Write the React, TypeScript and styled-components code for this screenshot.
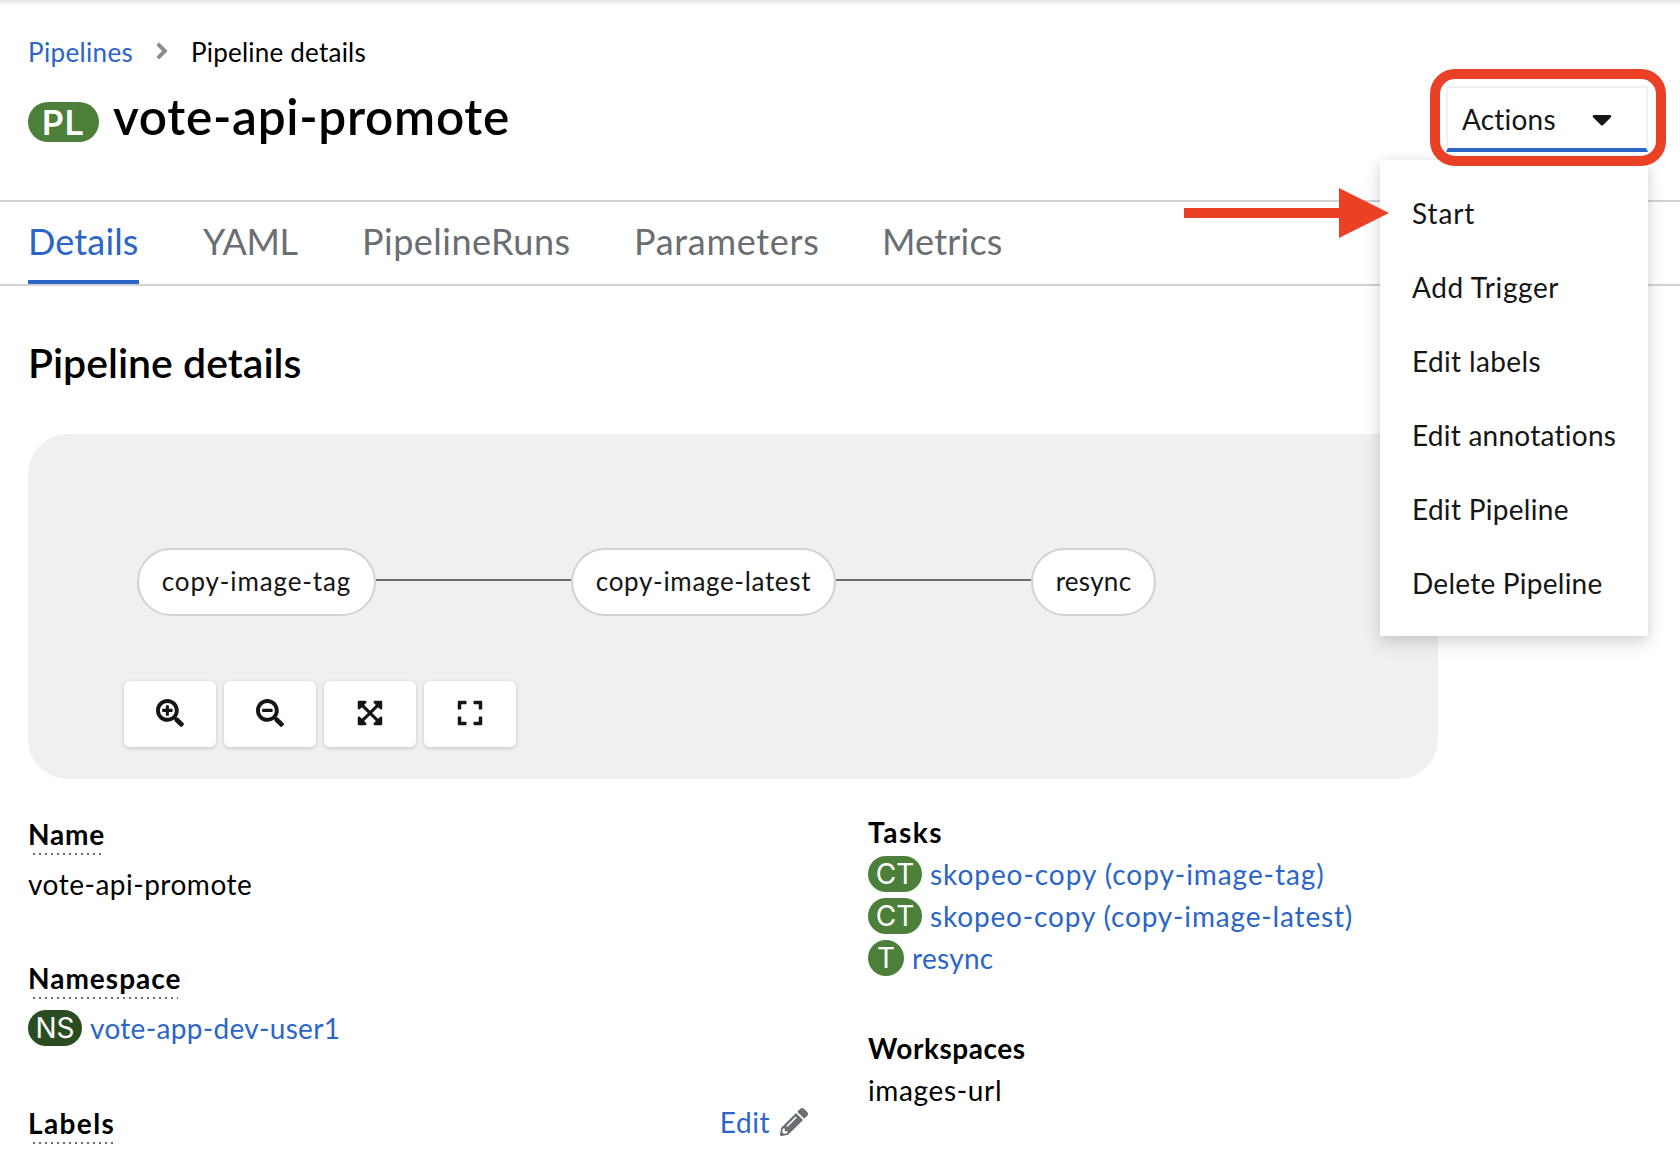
import React from "react";
import styled, { createGlobalStyle } from "styled-components";
import {
  FaAngleRight,
  FaCaretDown,
  FaExpand,
  FaExpandArrowsAlt,
  FaPencilAlt,
  FaSearchMinus,
  FaSearchPlus,
} from "react-icons/fa";

const color = {
  link: "#2b65c7",
  text: "#151515",
  muted: "#6a6e73",
  border: "#d2d2d2",
  surface: "#f0f0f0",
  green: "#4c7f3a",
  darkGreen: "#294d20",
  red: "#ea4025",
};

const GlobalStyle = createGlobalStyle`
  * { box-sizing: border-box; }
  body {
    margin: 0;
    background: #fff;
    color: #000;
    font-family: Lato, "Open Sans", sans-serif;
    font-size: 28px;
    font-variant-ligatures: none;
  }
`;

const Page = styled.div`
  height: 1154px;
  overflow: hidden;
  background: #fff;
`;

const Track = styled.span<{ $ls?: number }>`
  letter-spacing: ${(p) => p.$ls ?? 0}px;
  white-space: nowrap;
`;

const Header = styled.header`
  height: 202px;
  padding: 32px 32px 0 28px;
  border-bottom: 2px solid ${color.border};
  background: linear-gradient(#e9e9e9 0, #ededed 2px, #fafafa 4px, #fff 7px);
`;

const Breadcrumb = styled.nav`
  display: flex;
  align-items: center;
  height: 40px;
  margin-bottom: 14px;
  font-size: 26px;
  line-height: 40px;
`;

const Crumb = styled.a`
  width: 121px;
  color: ${color.link};
`;

const Separator = styled(FaAngleRight)`
  width: 26px;
  height: 26px;
  margin: 0 16px 2px 0;
  color: #8a8d90;
`;

const TitleRow = styled.div`
  display: flex;
  align-items: flex-start;
  justify-content: space-between;
`;

const Title = styled.h1`
  display: flex;
  margin: 0;
  height: 60px;
  font-size: 49.5px;
  font-weight: 600;
  line-height: 60px;
`;

const TitleBadge = styled.span`
  width: 71px;
  height: 40px;
  margin: 16px 14px 0 0;
  border-radius: 20px;
  background: ${color.green};
  color: #fff;
  font: 600 34px/41px Inter, sans-serif;
  letter-spacing: 0.8px;
  text-align: center;
`;

const Actions = styled.div`
  position: relative;
  width: 202px;
`;

const ActionsToggle = styled.button`
  display: flex;
  align-items: center;
  justify-content: space-between;
  width: 202px;
  height: 66px;
  padding: 1px 28px 0 14px;
  border: 2px solid #f0f0f0;
  border-bottom: 4px solid ${color.link};
  background: #fff;
  color: ${color.text};
  font: 400 28px/60px Lato, sans-serif;
`;

const Caret = styled(FaCaretDown)`
  width: 32px;
  height: 32px;
`;

const Menu = styled.ul`
  position: absolute;
  top: 74px;
  right: 0;
  z-index: 2;
  width: 268px;
  margin: 0;
  padding: 16px 0;
  list-style: none;
  background: #fff;
  box-shadow: 0 8px 16px rgba(3, 3, 3, 0.13), 0 0 12px rgba(3, 3, 3, 0.08);
`;

const MenuItem = styled.li`
  height: 74px;
  padding-left: 32px;
  color: ${color.text};
  line-height: 74px;
`;

const HighlightRing = styled.div`
  position: absolute;
  top: -17px;
  left: -16px;
  z-index: 3;
  width: 236px;
  height: 97px;
  border: 10px solid ${color.red};
  border-radius: 25px;
  pointer-events: none;
`;

const PointerArrow = styled.svg`
  position: absolute;
  top: 102px;
  left: -262px;
  z-index: 3;
  width: 205px;
  height: 50px;
  fill: ${color.red};
`;

const Tabs = styled.nav`
  display: grid;
  grid-template-columns: 175px 159px 272px 248px auto;
  height: 84px;
  padding-left: 28px;
  border-bottom: 2px solid ${color.border};
`;

const Tab = styled.a<{ $active?: boolean }>`
  justify-self: start;
  height: 82px;
  width: ${(p) => (p.$active ? "111px" : "auto")};
  border-bottom: 4px solid ${(p) => (p.$active ? color.link : "transparent")};
  color: ${(p) => (p.$active ? color.link : color.muted)};
  font-size: 36px;
  line-height: 78px;
`;

const Body = styled.main`
  padding: 52px 28px 0;
`;

const SectionTitle = styled.h2`
  margin: 0 0 47px;
  font-size: 41px;
  font-weight: 600;
  line-height: 49px;
`;

const GraphCard = styled.section`
  width: 1410px;
  height: 345px;
  padding: 114px 0 0 96px;
  border-radius: 40px;
  background: ${color.surface};
`;

const Graph = styled.div`
  display: flex;
  align-items: center;
  padding-left: 13px;
`;

const TaskNode = styled.div<{ $width: number }>`
  width: ${(p) => p.$width}px;
  height: 68px;
  border: 2px solid ${color.border};
  border-radius: 34px;
  background: #fff;
  color: ${color.text};
  font-size: 26px;
  line-height: 62px;
  text-align: center;
`;

const Connector = styled.div`
  width: 195px;
  height: 2px;
  margin-bottom: 4px;
  background: ${color.muted};
`;

const Controls = styled.div`
  display: flex;
  gap: 8px;
  margin-top: 65px;
`;

const ControlButton = styled.button`
  display: flex;
  align-items: center;
  justify-content: center;
  width: 92px;
  height: 66px;
  padding: 0 0 2px;
  border: 0;
  border-radius: 6px;
  background: #fff;
  color: ${color.text};
  box-shadow: 0 2px 4px rgba(3, 3, 3, 0.12), 0 0 4px rgba(3, 3, 3, 0.06);

  svg {
    width: 28px;
    height: 28px;
  }
`;

const DetailsGrid = styled.div`
  display: grid;
  grid-template-columns: 780px auto;
  column-gap: 60px;
  padding-top: 31px;
`;

const LeftColumn = styled.dl`
  margin: 2px 0 0;
`;

const Field = styled.div`
  height: 144px;

  &:last-child {
    padding-top: 1px;
  }
`;

const FieldHead = styled.div`
  display: flex;
  align-items: flex-start;
  justify-content: space-between;
`;

const HelpLabel = styled.dt<{ $width: number }>`
  width: ${(p) => p.$width}px;
  height: 43px;
  font-weight: 700;
  line-height: 44px;
  background: repeating-linear-gradient(90deg, transparent 0 4px, ${color.muted} 4px 6px) 1px 100% / 100% 2px no-repeat;
`;

const FieldValue = styled.dd`
  display: flex;
  height: 42px;
  margin: 7px 0 0;
  line-height: 44px;
`;

const EditLink = styled.a`
  display: flex;
  align-items: center;
  gap: 10px;
  color: ${color.link};
  line-height: 43px;

  svg {
    width: 28px;
    height: 28px;
    margin-bottom: 2px;
    color: ${color.muted};
  }
`;

const RightColumn = styled.div`
  line-height: 44px;
`;

const PlainLabel = styled.h3`
  margin: 0;
  height: 42px;
  font-size: 28px;
  font-weight: 700;
  line-height: 44px;
`;

const TaskRow = styled.div`
  display: flex;
  height: 42px;
`;

const WorkspaceBlock = styled.div`
  margin-top: 48px;
`;

const Badge = styled.span<{ $tone?: string; $width?: number }>`
  flex: none;
  width: ${(p) => p.$width ?? 54}px;
  height: 36px;
  margin: 4px 8px 0 0;
  border-radius: 18px;
  background: ${(p) => p.$tone ?? color.green};
  color: #fff;
  font: 400 28px/37px Inter, sans-serif;
  text-align: center;
`;

const NamespaceBadge = styled(Badge)`
  margin-top: 4px;
`;

const Link = styled.a`
  color: ${color.link};
`;

const menuItems: [string, number][] = [
  ["Start", 0.9],
  ["Add Trigger", 0.6],
  ["Edit labels", 0.37],
  ["Edit annotations", 0.25],
  ["Edit Pipeline", 0.3],
  ["Delete Pipeline", 0.25],
];

const tabs: [string, number][] = [
  ["Details", 0.15],
  ["YAML", -0.4],
  ["PipelineRuns", 0.5],
  ["Parameters", 0.7],
  ["Metrics", 0.2],
];

const tasks: [string, number, string, number][] = [
  ["CT", 54, "skopeo-copy (copy-image-tag)", 0.94],
  ["CT", 54, "skopeo-copy (copy-image-latest)", 0.84],
  ["T", 36, "resync", 0.3],
];

export default function App() {
  return (
    <Page>
      <GlobalStyle />
      <Header>
        <Breadcrumb>
          <Crumb><Track $ls={0.35}>Pipelines</Track></Crumb>
          <Separator />
          <Track $ls={0.22}>Pipeline details</Track>
        </Breadcrumb>
        <TitleRow>
          <Title>
            <TitleBadge>PL</TitleBadge>
            <Track $ls={0.7}>vote-api-promote</Track>
          </Title>
          <Actions>
            <ActionsToggle>
              <Track $ls={0.2}>Actions</Track>
              <Caret />
            </ActionsToggle>
            <Menu>
              {menuItems.map(([label, ls]) => (
                <MenuItem key={label}><Track $ls={ls}>{label}</Track></MenuItem>
              ))}
            </Menu>
            <HighlightRing />
            <PointerArrow viewBox="0 0 205 50">
              <path d="M0 20H155V0L205 25L155 50V30H0Z" />
            </PointerArrow>
          </Actions>
        </TitleRow>
      </Header>
      <Tabs>
        {tabs.map(([label, ls], i) => (
          <Tab key={label} $active={i === 0}><Track $ls={ls}>{label}</Track></Tab>
        ))}
      </Tabs>
      <Body>
        <SectionTitle><Track>Pipeline details</Track></SectionTitle>
        <GraphCard>
          <Graph>
            <TaskNode $width={239}><Track $ls={0.87}>copy-image-tag</Track></TaskNode>
            <Connector />
            <TaskNode $width={265}><Track $ls={0.67}>copy-image-latest</Track></TaskNode>
            <Connector />
            <TaskNode $width={125}><Track $ls={0.28}>resync</Track></TaskNode>
          </Graph>
          <Controls>
            <ControlButton><FaSearchPlus /></ControlButton>
            <ControlButton><FaSearchMinus /></ControlButton>
            <ControlButton><FaExpandArrowsAlt /></ControlButton>
            <ControlButton><FaExpand /></ControlButton>
          </Controls>
        </GraphCard>
        <DetailsGrid>
          <LeftColumn>
            <Field>
              <HelpLabel $width={75}><Track $ls={0.8}>Name</Track></HelpLabel>
              <FieldValue><Track $ls={0.51}>vote-api-promote</Track></FieldValue>
            </Field>
            <Field>
              <HelpLabel $width={150}><Track $ls={1}>Namespace</Track></HelpLabel>
              <FieldValue>
                <NamespaceBadge $tone={color.darkGreen}>NS</NamespaceBadge>
                <Link><Track $ls={0.32}>vote-app-dev-user1</Track></Link>
              </FieldValue>
            </Field>
            <Field>
              <FieldHead>
                <HelpLabel $width={86}><Track $ls={1.4}>Labels</Track></HelpLabel>
                <EditLink><Track $ls={0.55}>Edit</Track><FaPencilAlt /></EditLink>
              </FieldHead>
            </Field>
          </LeftColumn>
          <RightColumn>
            <PlainLabel><Track $ls={1.5}>Tasks</Track></PlainLabel>
            {tasks.map(([kind, width, name, ls]) => (
              <TaskRow key={name}>
                <Badge $width={width}>{kind}</Badge>
                <Link><Track $ls={ls}>{name}</Track></Link>
              </TaskRow>
            ))}
            <WorkspaceBlock>
              <PlainLabel><Track $ls={0.55}>Workspaces</Track></PlainLabel>
              <Track $ls={0.65}>images-url</Track>
            </WorkspaceBlock>
          </RightColumn>
        </DetailsGrid>
      </Body>
    </Page>
  );
}
